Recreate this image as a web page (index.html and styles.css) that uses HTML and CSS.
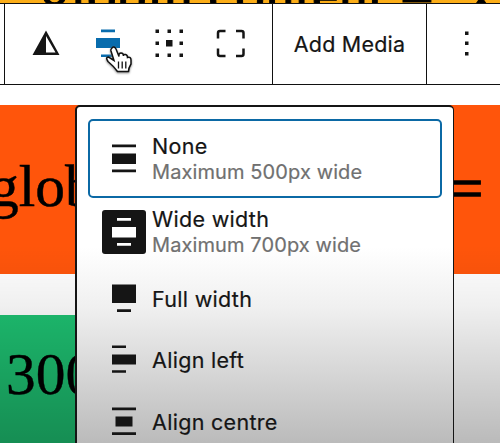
FILE: index.html
```html
<!DOCTYPE html>
<html lang="en">
<head>
<meta charset="utf-8">
<title>Block alignment</title>
<link rel="stylesheet" href="styles.css">
</head>
<body>
<div class="editor">
  <div class="strip"><span>globin content =</span><span class="value">x</span></div>
  <div class="toolbar">
    <div class="group edge"></div>
    <div class="group tools">
      <svg class="icon" viewBox="0 0 36 36"><path fill-rule="evenodd" d="M18 4.500L31.500 29H4.500ZM18 26.500H27.500L18 10Z"/></svg>
      <svg class="icon active" viewBox="0 0 36 36"><path d="M11 3.500h14v2.700H11zM6 12h24v10H6zM11 28.500h14v2.500H11z"/></svg>
      <svg class="icon" viewBox="0 0 36 36"><path d="M4.500 3.500h3.500v3.500H4.500zM16.500 3.500h3.500v3.500h-3.500zM28.500 3.500h3.500v3.500h-3.500zM4.500 15.500h3.500v3.500H4.500zM15 14h6.500v6.500h-6.500zM28.500 15.500h3.500v3.500h-3.500zM4.500 27.500h3.500v3.500H4.500zM16.500 27.500h3.500v3.500h-3.500zM28.500 27.500h3.500v3.500h-3.500z"/></svg>
      <svg class="icon outline" viewBox="0 0 36 36"><path d="M5 12.500V7q0-2 2-2H12.500M23 5h5.500q2 0 2 2v5.500M30.500 22.500V28q0 2-2 2H23M12.500 30H7q-2 0-2-2V22.500"/></svg>
    </div>
    <div class="group media">Add Media</div>
    <div class="group more"><svg class="icon" viewBox="0 0 36 36"><path d="M16 5.500h3.500v3.500h-3.500zM16 15.500h3.500v3.500h-3.500zM16 26h3.500v3.500h-3.500z"/></svg></div>
  </div>
  <div class="block orange"><span>glob</span><span class="equals">=</span></div>
  <div class="block green">300</div>
  <div class="shade"></div>
  <div class="menu">
    <div class="item focused">
      <svg class="glyph" viewBox="0 0 44 44"><path d="M10 7.500h24v2.700H10zM10 16.500h24v10.500H10zM10 32.500h24v2.700H10z"/></svg>
      <div class="copy"><div class="label">None</div><div class="hint">Maximum 500px wide</div></div>
    </div>
    <div class="item wide">
      <svg class="glyph selected" viewBox="0 0 44 44"><path d="M15 8h14v2.700H15zM10 17h24v10.500H10zM15 33h14v2.700H15z"/></svg>
      <div class="copy"><div class="label">Wide width</div><div class="hint">Maximum 700px wide</div></div>
    </div>
    <div class="item single">
      <svg class="glyph" viewBox="0 0 44 44"><path d="M10 7.500h24v18.500H10zM15 32.200h14v2.700H15z"/></svg>
      <div class="label">Full width</div>
    </div>
    <div class="item single">
      <svg class="glyph" viewBox="0 0 44 44"><path d="M10 7.500h14v2.500H10zM10 16.500h24v10H10zM10 32.200h14v2.500H10z"/></svg>
      <div class="label">Align left</div>
    </div>
    <div class="item single">
      <svg class="glyph" viewBox="0 0 44 44"><path d="M10 7.500h24v2.700H10zM13.500 16.500h17v10h-17zM10 32.200h24v2.700H10z"/></svg>
      <div class="label">Align centre</div>
    </div>
  </div>
  <svg class="cursor" viewBox="0 0 28 30"><path class="hand" d="M7 2Q9-.5 11 3L14 10.500Q13.500 7 16 7Q18.500 7 18.500 10Q18.500 8 20.500 8.500Q22.500 9 22.500 11.500Q26 10.500 26 14V18Q23.500 22 23.500 25.500H12.500Q8.500 20 3 15.500Q0 11 3.500 11L9 14.500L6 5Q5.500 3 7 2Z"/><path class="lines" d="M13.500 15.500v7M17.200 15.500v7M20.800 15.500v7"/></svg>
</div>
</body>
</html>
```
FILE: styles.css
```css
* { box-sizing: border-box; }
body { margin: 0; background: #fff; }
.editor {
  position: relative;
  width: 500px;
  height: 443px;
  overflow: hidden;
  font-family: Inter, "Liberation Sans", sans-serif;
  color: #151515;
}
.strip {
  height: 3px;
  overflow: hidden;
  background: #fbad18;
  color: #000;
  white-space: nowrap;
  font: 60px/60px "Liberation Serif", serif;
  display: flex;
  align-items: flex-end;
  padding-left: 40px;
  gap: 32px;
}
.strip span { margin-bottom: -21px; -webkit-text-stroke: 1px #000; }
.toolbar {
  display: flex;
  height: 82px;
  border: solid #111;
  border-width: 1.500px 0;
  position: relative;
  background: #fff;
}
.group { display: flex; align-items: center; }
.edge { width: 5px; border-right: 1px solid #111; }
.tools { width: 267px; padding-left: 23px; gap: 25.500px; }
.media {
  width: 155px;
  justify-content: center;
  border: solid #111;
  border-width: 0 1.500px;
  font-size: 21.500px;
  letter-spacing: .2px;
  -webkit-text-stroke: .2px #151515;
}
.more { padding-left: 22px; }
.icon { width: 36px; height: 36px; fill: #151515; flex: none; }
.icon.active { fill: #086cad; }
.icon.outline { fill: none; stroke: #151515; stroke-width: 2.500px; }
.block { color: #000; font: 59.500px/57px "Liberation Serif", serif; }
.orange {
  display: flex;
  justify-content: space-between;
  height: 169px;
  margin-top: 20px;
  padding: 53px 17px 0 0;
  background: #ff550b;
}
.orange span:first-child { margin-left: -11px; -webkit-text-stroke: .5px #000; }
.equals { padding-top: 2px; -webkit-text-stroke: 1.500px #000; }
.green { width: 100px; height: 130px; margin-top: 41px; padding: 31px 0 0 6px; background: #1ec272; -webkit-text-stroke: .4px #000; }
.shade {
  position: absolute;
  inset: 245px 0 0;
  background: linear-gradient(transparent, rgba(0,0,0,.06) 30%, rgba(0,0,0,.27));
}
.menu {
  position: absolute;
  left: 75px;
  top: 105px;
  width: 379px;
  height: 350px;
  padding: 12px 11px;
  border: 1.500px solid #151515;
  border-width: 2px 1.500px 2px 2px;
  border-radius: 5px;
  background: linear-gradient(#fff 140px, #f0f0f0 200px, #bababa 338px);
}
.item { display: flex; align-items: center; gap: 6px; padding-left: 14px; }
.focused { height: 79px; padding-left: 12px; border: 2px solid #0b69a5; border-radius: 5px; }
.wide { height: 67px; }
.single { height: 61.500px; position: relative; top: 3px; }
.glyph { width: 44px; height: 44px; flex: none; fill: #151515; }
.selected { background: #151515; fill: #fff; border-radius: 3px; }
.label { font-size: 21.500px; line-height: 26px; letter-spacing: .3px; -webkit-text-stroke: .2px #151515; }
.hint { font-size: 20px; line-height: 26px; color: #707070; letter-spacing: .1px; -webkit-text-stroke: .2px #707070; }
.cursor { position: absolute; left: 105px; top: 46px; width: 28px; height: 30px; filter: drop-shadow(0 1px 1px #888); }
.hand { fill: #fff; stroke: #111; stroke-width: 1.500px; }
.lines { fill: none; stroke: #111; stroke-width: 1.300px; }
```
